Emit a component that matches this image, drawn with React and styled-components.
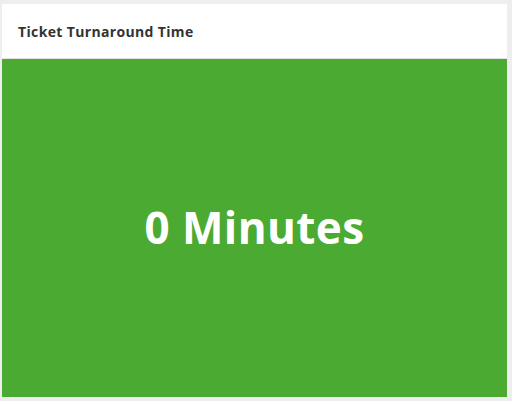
import styled, { createGlobalStyle } from 'styled-components';

const GlobalStyle = createGlobalStyle`
  html, body {
    margin: 0;
    padding: 0;
    background: #eeeeee;
    font-family: "Open Sans", "Liberation Sans", sans-serif;
  }
`;

const Page = styled.div`
  width: 512px;
  height: 401px;
  padding: 4px 5px 4px 2px;
  box-sizing: border-box;
`;

const Card = styled.div`
  height: 100%;
  display: flex;
  flex-direction: column;
  background: #ffffff;
`;

const Header = styled.div`
  height: 54px;
  display: flex;
  align-items: center;
  padding: 0 17px 0 16px;
  border-bottom: 1px solid #e4e4e4;
  flex-shrink: 0;
`;

const Title = styled.h3`
  margin: 0;
  font-size: 14px;
  font-weight: 700;
  letter-spacing: 0.35px;
  color: #333333;
`;

const Body = styled.div`
  flex: 1;
  display: flex;
  align-items: center;
  justify-content: center;
  background: ${(p) => p.$color};
`;

const Value = styled.div`
  color: #ffffff;
  font-size: 44px;
  font-weight: 700;
  letter-spacing: 0.4px;
  margin-top: -2px;
`;

export default function App() {
  return (
    <>
      <GlobalStyle />
      <Page>
        <Card>
          <Header>
            <Title>Ticket Turnaround Time</Title>
          </Header>
          <Body $color="#4aaa31">
            <Value>0 Minutes</Value>
          </Body>
        </Card>
      </Page>
    </>
  );
}
